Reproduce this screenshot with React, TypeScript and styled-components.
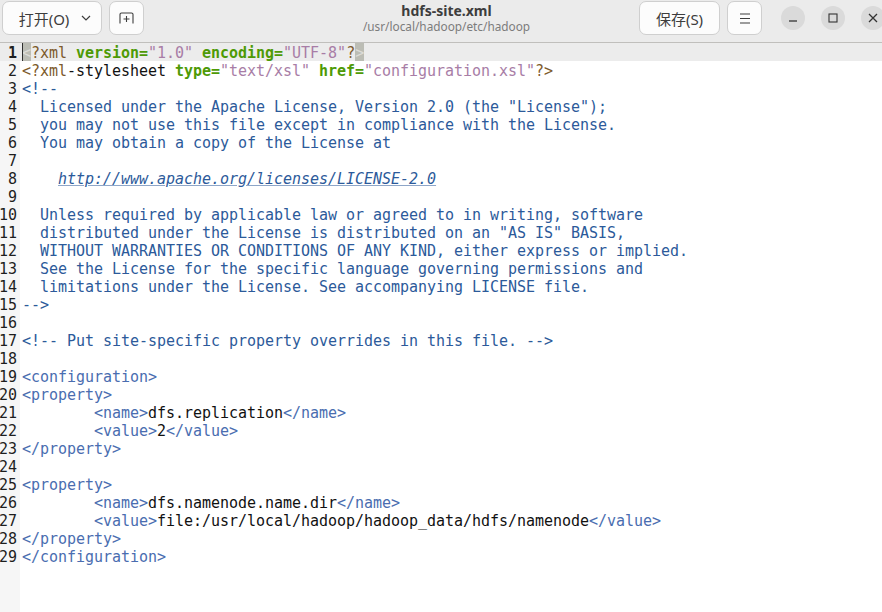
import React from 'react';
import styled, { createGlobalStyle } from 'styled-components';

const GlobalStyle = createGlobalStyle`
  html, body {
    margin: 0;
    padding: 0;
    background: #ffffff;
  }
`;

const UI_FONT = `"Noto Sans", "Noto Sans CJK SC", "Open Sans", sans-serif`;
const CODE_FONT = `"DejaVu Sans Mono", "Liberation Mono", monospace`;

const Window = styled.div`
  width: 882px;
  height: 612px;
  display: flex;
  flex-direction: column;
  overflow: hidden;
`;

const HeaderBar = styled.header`
  height: 41px;
  flex: none;
  display: flex;
  align-items: flex-start;
  padding: 1px 0 0 2px;
  background: #ebebeb;
  border-bottom: 1px solid #c0bfbc;
  font-family: ${UI_FONT};
`;

const ButtonGroup = styled.div`
  display: flex;
  align-items: center;
  gap: 7px;
  flex: none;
`;

const ToolButton = styled.button<{ $width: number }>`
  width: ${(p) => p.$width}px;
  height: 34px;
  flex: none;
  display: flex;
  align-items: center;
  justify-content: center;
  gap: 12px;
  padding: 0;
  background: #fcfcfc;
  border: 1px solid #cfcfcf;
  border-radius: 7px;
  font-family: ${UI_FONT};
  font-size: 15px;
  color: #3d3d3d;
`;

const OpenButton = styled(ToolButton)`
  padding-left: 6px;
`;

const TitleBlock = styled.div`
  flex: 1;
  min-width: 0;
  display: flex;
  flex-direction: column;
  align-items: center;
  padding: 2px 0 0 110px;
`;

const FileName = styled.div`
  font-size: 14px;
  line-height: 16px;
  font-weight: 700;
  color: #3d3d3d;
`;

const FilePath = styled.div`
  font-size: 11.8px;
  line-height: 15px;
  color: #7c7c7c;
`;

const RightGroup = styled(ButtonGroup)`
  margin-right: -3px;
`;

const WindowControls = styled.div`
  display: flex;
  gap: 16px;
  margin-left: 12px;
`;

const RoundButton = styled.div`
  width: 24px;
  height: 24px;
  border-radius: 50%;
  background: #dadada;
  display: flex;
  align-items: center;
  justify-content: center;
  flex: none;
`;

const Editor = styled.main`
  flex: 1;
  display: flex;
  min-height: 0;
  background: #ffffff;
  font-family: ${CODE_FONT};
  font-size: 15px;
  line-height: 20px;
  letter-spacing: -0.03px;
`;

const Gutter = styled.div`
  width: 20px;
  flex: none;
  background: #f6f6f6;
  color: #1e1e1e;
`;

const LineNumber = styled.div<{ $current?: boolean }>`
  height: 18px;
  box-sizing: border-box;
  padding-right: 3px;
  display: flex;
  justify-content: flex-end;
  white-space: nowrap;
  font-weight: ${(p) => (p.$current ? 700 : 400)};
  background: ${(p) => (p.$current ? '#ececec' : 'transparent')};
`;

const Code = styled.div`
  flex: 1;
  min-width: 0;
`;

const CodeLine = styled.div<{ $current?: boolean }>`
  position: relative;
  height: 18px;
  padding-left: 2px;
  white-space: pre;
  color: #111111;
  background: ${(p) => (p.$current ? '#ececec' : 'transparent')};
`;

const Caret = styled.span`
  position: absolute;
  left: 2px;
  top: 0;
  width: 1px;
  height: 18px;
  background: #2e2e2e;
`;

const Decl = styled.span`
  color: #7d5a2c;
`;
const Attr = styled.span`
  color: #4e9a06;
  font-weight: 700;
`;
const Str = styled.span`
  color: #a87da6;
`;
const Tag = styled.span`
  color: #4a6db0;
`;
const Comment = styled.span`
  color: #2c5a9a;
`;
const Link = styled(Comment)`
  font-style: italic;
  text-decoration: underline;
  text-decoration-color: #8ea6c8;
`;
const Bracket = styled.span`
  display: inline-block;
  height: 18px;
  vertical-align: top;
  background: #bcbdb5;
  color: #dcdcd8;
`;

const lines: React.ReactNode[] = [
  <>
    <Caret />
    <Bracket>&lt;</Bracket>
    <Decl>?xml</Decl> <Attr>version=</Attr>
    <Str>"1.0"</Str> <Attr>encoding=</Attr>
    <Str>"UTF-8"</Str>
    <Decl>?</Decl>
    <Bracket>&gt;</Bracket>
  </>,
  <>
    <Decl>&lt;?xml</Decl>-stylesheet <Attr>type=</Attr>
    <Str>"text/xsl"</Str> <Attr>href=</Attr>
    <Str>"configuration.xsl"</Str>
    <Decl>?&gt;</Decl>
  </>,
  <Comment>&lt;!--</Comment>,
  <Comment>  Licensed under the Apache License, Version 2.0 (the "License");</Comment>,
  <Comment>  you may not use this file except in compliance with the License.</Comment>,
  <Comment>  You may obtain a copy of the License at</Comment>,
  '',
  <>
    {'    '}
    <Link>http://www.apache.org/licenses/LICENSE-2.0</Link>
  </>,
  '',
  <Comment>  Unless required by applicable law or agreed to in writing, software</Comment>,
  <Comment>  distributed under the License is distributed on an "AS IS" BASIS,</Comment>,
  <Comment>  WITHOUT WARRANTIES OR CONDITIONS OF ANY KIND, either express or implied.</Comment>,
  <Comment>  See the License for the specific language governing permissions and</Comment>,
  <Comment>  limitations under the License. See accompanying LICENSE file.</Comment>,
  <Comment>--&gt;</Comment>,
  '',
  <Comment>&lt;!-- Put site-specific property overrides in this file. --&gt;</Comment>,
  '',
  <Tag>&lt;configuration&gt;</Tag>,
  <Tag>&lt;property&gt;</Tag>,
  <>
    {'        '}
    <Tag>&lt;name&gt;</Tag>dfs.replication<Tag>&lt;/name&gt;</Tag>
  </>,
  <>
    {'        '}
    <Tag>&lt;value&gt;</Tag>2<Tag>&lt;/value&gt;</Tag>
  </>,
  <Tag>&lt;/property&gt;</Tag>,
  '',
  <Tag>&lt;property&gt;</Tag>,
  <>
    {'        '}
    <Tag>&lt;name&gt;</Tag>dfs.namenode.name.dir<Tag>&lt;/name&gt;</Tag>
  </>,
  <>
    {'        '}
    <Tag>&lt;value&gt;</Tag>file:/usr/local/hadoop/hadoop_data/hdfs/namenode<Tag>&lt;/value&gt;</Tag>
  </>,
  <Tag>&lt;/property&gt;</Tag>,
  <Tag>&lt;/configuration&gt;</Tag>,
];

const App = () => {
  return (
    <Window>
      <GlobalStyle />
      <HeaderBar>
        <ButtonGroup>
          <OpenButton $width={100}>
            打开(O)
            <svg width="10" height="6" viewBox="0 0 10 6" fill="none" stroke="#3d3d3d" strokeWidth="1.2">
              <path d="M1 1l4 4 4-4" />
            </svg>
          </OpenButton>
          <ToolButton $width={35}>
            <svg width="15" height="12" viewBox="0 0 15 12" fill="none" stroke="#3d3d3d" strokeWidth="1.1">
              <path d="M1 11.5V2.5A1.5 1.5 0 0 1 2.5 1h10A1.5 1.5 0 0 1 14 2.5v9" />
              <path d="M7.5 4v6M4.5 7h6" />
            </svg>
          </ToolButton>
        </ButtonGroup>
        <TitleBlock>
          <FileName>hdfs-site.xml</FileName>
          <FilePath>/usr/local/hadoop/etc/hadoop</FilePath>
        </TitleBlock>
        <RightGroup>
          <ToolButton $width={81}>保存(S)</ToolButton>
          <ToolButton $width={35}>
            <svg width="12" height="11" viewBox="0 0 12 11" stroke="#3d3d3d" strokeWidth="1.1">
              <path d="M1 1h10M1 5.5h10M1 10h10" />
            </svg>
          </ToolButton>
          <WindowControls>
            <RoundButton>
              <svg width="10" height="10" viewBox="0 0 10 10" stroke="#333333" strokeWidth="1.3">
                <path d="M1 8h8" />
              </svg>
            </RoundButton>
            <RoundButton>
              <svg width="10" height="10" viewBox="0 0 10 10" fill="none" stroke="#333333" strokeWidth="1.1">
                <rect x="1" y="1" width="8" height="8" />
              </svg>
            </RoundButton>
            <RoundButton>
              <svg width="10" height="10" viewBox="0 0 10 10" stroke="#333333" strokeWidth="1.3">
                <path d="M1 1l8 8M9 1l-8 8" />
              </svg>
            </RoundButton>
          </WindowControls>
        </RightGroup>
      </HeaderBar>
      <Editor>
        <Gutter>
          {lines.map((_, i) => (
            <LineNumber key={i} $current={i === 0}>
              {i + 1}
            </LineNumber>
          ))}
        </Gutter>
        <Code>
          {lines.map((line, i) => (
            <CodeLine key={i} $current={i === 0}>
              {line}
            </CodeLine>
          ))}
        </Code>
      </Editor>
    </Window>
  );
};

export default App;
